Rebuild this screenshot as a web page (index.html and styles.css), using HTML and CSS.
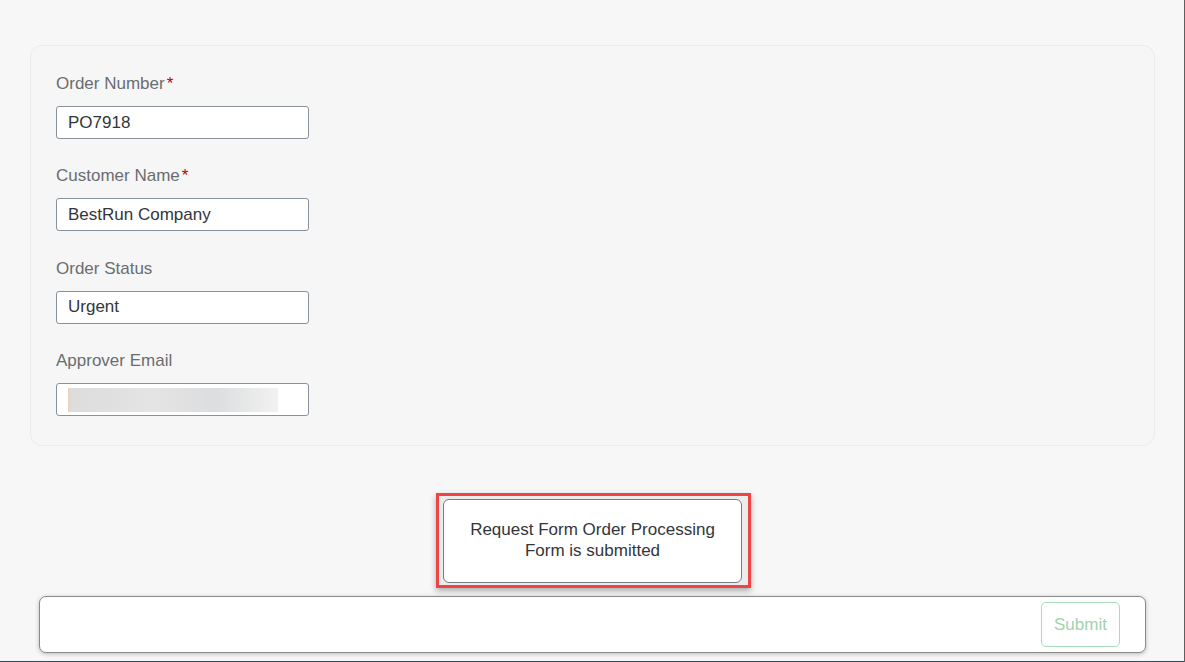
FILE: index.html
```html
<!DOCTYPE html>
<html>
<head>
<meta charset="utf-8">
<link rel="stylesheet" href="styles.css">
</head>
<body>
<div class="page">
  <main class="main">
    <section class="card">
      <div class="field">
        <label class="label">Order Number<span class="req">*</span></label>
        <div class="input">PO7918</div>
      </div>
      <div class="field">
        <label class="label">Customer Name<span class="req">*</span></label>
        <div class="input">BestRun Company</div>
      </div>
      <div class="field">
        <label class="label">Order Status</label>
        <div class="input">Urgent</div>
      </div>
      <div class="field last">
        <label class="label">Approver Email</label>
        <div class="input"><span class="blur"></span></div>
      </div>
    </section>
  </main>
  <div class="composer">
    <div class="composer-box">
      <button class="submit">Submit</button>
    </div>
  </div>
  <div class="footer-line"></div>
  <div class="toast-highlight">
    <div class="toast">Request Form Order Processing<br>Form is submitted</div>
  </div>
</div>
</body>
</html>
```

FILE: styles.css
```css
html, body {
  margin: 0;
  padding: 0;
}
body {
  width: 1185px;
  height: 662px;
  overflow: hidden;
  background: #f7f7f7;
  font-family: "Liberation Sans", Arial, sans-serif;
  font-size: 17px;
  color: #32363a;
}
.page {
  position: relative;
  box-sizing: border-box;
  width: 1185px;
  height: 662px;
  border-right: 1px solid #5f5f5f;
  display: flex;
  flex-direction: column;
}
.main {
  padding: 45px 29px 0 30px;
  flex: 1;
}
.card {
  box-sizing: border-box;
  height: 401px;
  border: 1px solid #ececec;
  border-radius: 12px;
  background: #f6f6f6;
  padding: 26px 25px 0 25px;
}
.field {
  display: flex;
  flex-direction: column;
  align-items: flex-start;
  margin-bottom: 25.4px;
}
.field.last {
  margin-bottom: 0;
}
.label {
  color: #6a6d70;
  line-height: 21px;
  height: 21px;
  padding-top: 1px;
  margin-bottom: 12px;
}
.req {
  color: #bb0000;
  margin-left: 2px;
}
.input {
  box-sizing: border-box;
  width: 253px;
  height: 33px;
  border: 1px solid #89919a;
  border-radius: 3px;
  background: #fff;
  padding: 0 11px;
  display: flex;
  align-items: center;
  color: #32363a;
}
.blur {
  display: block;
  width: 210px;
  height: 24px;
  margin-left: 0;
  background: linear-gradient(90deg, #efd3b8 0px, #dcdcdc 3px, #e4e4e4 40%, #dcdddf 70%, #f2f2f2 100%);
  filter: blur(0.4px);
}
.composer {
  padding: 0 38px 8px 39px;
}
.composer-box {
  box-sizing: border-box;
  height: 57px;
  border: 1px solid #8a8a8a;
  border-radius: 7px;
  background: #fff;
  box-shadow: 0 1px 4px rgba(0, 0, 0, 0.25);
  display: flex;
  justify-content: flex-end;
  align-items: center;
  padding-right: 25px;
}
.submit {
  box-sizing: border-box;
  width: 79px;
  height: 45px;
  border: 1px solid #a9dbba;
  border-radius: 5px;
  background: #fff;
  color: #9fd3ae;
  font-family: "Liberation Sans", Arial, sans-serif;
  font-size: 17px;
  padding: 0;
}
.footer-line {
  height: 1px;
  background: #2c4a58;
  margin-top: auto;
}
.toast-highlight {
  position: absolute;
  left: 436px;
  top: 493px;
  box-sizing: border-box;
  width: 315px;
  height: 95px;
  border: 3px solid #ef4444;
  background: #ececec;
  padding: 3px 6px 2px 4px;
  box-shadow: 0 3px 6px rgba(0, 0, 0, 0.3);
}
.toast {
  box-sizing: border-box;
  width: 100%;
  height: 100%;
  border: 1px solid #7a7a7a;
  border-radius: 6px;
  background: #fff;
  text-align: center;
  line-height: 21px;
  padding-top: 19px;
  color: #32363a;
}
```
